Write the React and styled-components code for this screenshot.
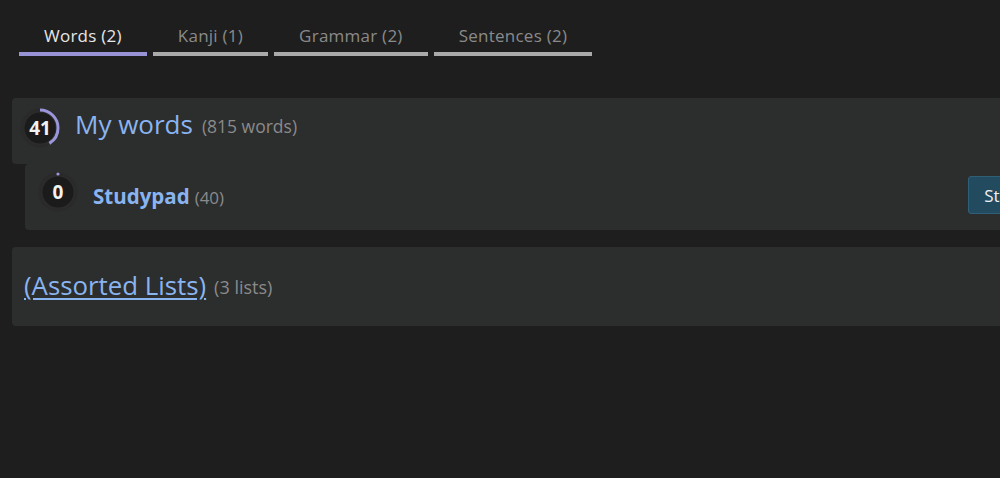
import React from "react"
import styled, { createGlobalStyle } from "styled-components"

const GlobalStyle = createGlobalStyle`
  html, body {
    margin: 0;
    padding: 0;
    background: #1e1e1e;
    overflow: hidden;
  }
  body {
    font-family: "Open Sans", "Noto Sans", sans-serif;
    color: #ddd;
  }
`

const Page = styled.div`
  width: 1200px;
  height: 478px;
  padding: 18px 0 0 12px;
  box-sizing: border-box;
`

const Tabs = styled.div`
  display: flex;
  gap: 6px;
  margin-left: 7px;
`

const Tab = styled.div`
  padding: 7px 25px 5px;
  font-size: 17px;
  letter-spacing: 0.25px;
  line-height: 22px;
  color: ${props => (props.active ? "#e6e6e6" : "#8a8a8a")};
  border-bottom: 4px solid ${props => (props.active ? "#9893d6" : "#aaaaaa")};
`

const Lists = styled.div`
  margin-top: 42px;
  display: flex;
  flex-direction: column;
`

const Card = styled.div`
  background: #2c2d2d;
  border-radius: 4px;
  display: flex;
  align-items: center;
  margin-left: ${props => props.indent || 0}px;
  height: ${props => props.h}px;
  padding-left: ${props => props.pad || 9}px;
  margin-top: ${props => props.gap || 0}px;
`

const RingBox = styled.div`
  display: flex;
  position: relative;
  top: ${props => props.dy || 0}px;
`

const Title = styled.span`
  color: #8ab4f0;
  font-size: ${props => props.size}px;
  font-weight: ${props => (props.bold ? 700 : 400)};
  text-decoration: ${props => (props.link ? "underline" : "none")};
  text-decoration-thickness: 2px;
  text-underline-offset: 3px;
  margin-left: ${props => props.ml || 0}px;
  position: relative;
  top: ${props => props.dy || 0}px;
`

const Count = styled.span`
  color: #8a8a8a;
  font-size: ${props => props.size || 17}px;
  margin-left: ${props => props.ml || 7}px;
  position: relative;
  top: ${props => props.dy || 0}px;
`

const Spacer = styled.div`
  flex: 1;
`

const Button = styled.div`
  height: 38px;
  box-sizing: border-box;
  padding: 0 15px;
  display: flex;
  align-items: center;
  background: #234b60;
  border: 1px solid #2f6078;
  border-radius: 3px;
  color: #f0f0f0;
  font-size: 17px;
  font-weight: 500;
  margin-right: 155px;
  position: relative;
  top: -2px;
`

const Ring = ({ value, pct }) => {
  const r = 18
  const c = 2 * Math.PI * r
  return (
    <svg width="40" height="40" viewBox="0 0 40 40">
      <circle cx="20" cy="20" r={r} fill="none" stroke="#2a2a2a" strokeWidth="3" />
      <circle cx="20" cy="20" r="15.5" fill="#1b1b1b" />
      {pct > 0 ? (
        <circle
          cx="20"
          cy="20"
          r={r}
          fill="none"
          stroke="#9b95da"
          strokeWidth="3"
          strokeDasharray={`${c * pct} ${c}`}
          transform="rotate(-90 20 20)"
        />
      ) : (
        <circle cx="20" cy="2" r="1.6" fill="#9b95da" />
      )}
      <text
        x="20"
        y="26.5"
        textAnchor="middle"
        fill="#f2f2f2"
        fontSize="19"
        fontWeight="700"
        fontFamily="Open Sans, sans-serif"
      >
        {value}
      </text>
    </svg>
  )
}

export default function App() {
  return (
    <Page>
      <GlobalStyle />
      <Tabs>
        <Tab active>Words (2)</Tab>
        <Tab>Kanji (1)</Tab>
        <Tab>Grammar (2)</Tab>
        <Tab>Sentences (2)</Tab>
      </Tabs>
      <Lists>
        <Card h={66} pad={8}>
          <RingBox dy={-3}>
            <Ring value="41" pct={0.41} />
          </RingBox>
          <Title size={26} ml={15} dy={-7}>
            My words
          </Title>
          <Count size={17.5} ml={9} dy={-5}>
            (815 words)
          </Count>
        </Card>
        <Card h={66} indent={13} pad={13}>
          <RingBox dy={-5}>
            <Ring value="0" pct={0} />
          </RingBox>
          <Title size={20.5} bold ml={15} dy={-1}>
            Studypad
          </Title>
          <Count ml={5}>(40)</Count>
          <Spacer />
          <Button>Study</Button>
        </Card>
        <Card h={79} gap={17} pad={12}>
          <Title size={25.8} link dy={-2}>
            (Assorted Lists)
          </Title>
          <Count size={18} ml={8}>
            (3 lists)
          </Count>
        </Card>
      </Lists>
    </Page>
  )
}
